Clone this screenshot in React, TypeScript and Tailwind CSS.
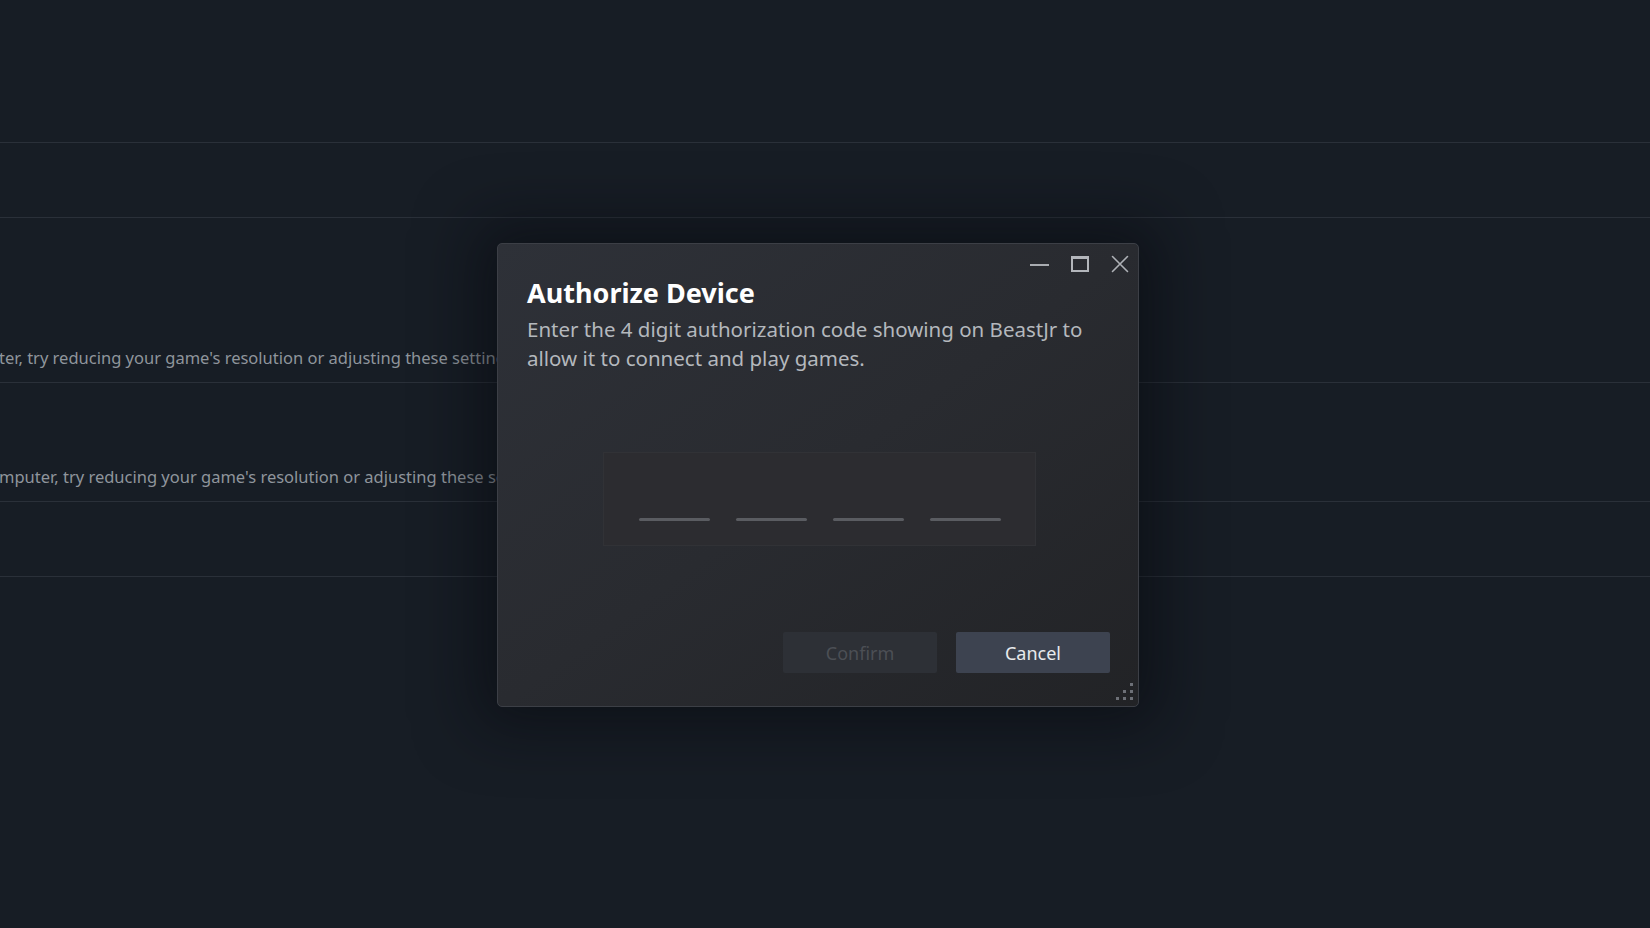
// Rows of the settings page sitting behind the modal
const rows = [
  { h: "h-[143px]", text: "" },
  { h: "h-[75px]", text: "" },
  { h: "h-[165px]", text: "ter, try reducing your game's resolution or adjusting these settings." },
  { h: "h-[119px]", text: "mputer, try reducing your game's resolution or adjusting these settings." },
  { h: "h-[75px]", text: "" },
];

function ResizeGrip() {
  const dots = [
    [0, 0, 1],
    [0, 1, 1],
    [1, 1, 1],
  ];
  return (
    <div className="absolute right-[5px] bottom-[6px] flex flex-col gap-[4px]">
      {dots.map((row, r) => (
        <div key={r} className="flex gap-[4px]">
          {row.map((on, c) => (
            <span key={c} className={`w-[3px] h-[3px] ${on ? "bg-[#6d7077]" : "bg-transparent"}`} />
          ))}
        </div>
      ))}
    </div>
  );
}

export default function App() {
  return (
    <div
      className="relative w-[1650px] h-[928px] overflow-hidden bg-[#171d25]"
      style={{ fontFamily: '"Noto Sans", "Open Sans", sans-serif' }}
    >
      {/* Background settings rows */}
      <div className="flex flex-col">
        {rows.map((row, i) => (
          <div key={i} className={`${row.h} border-b border-[#2a3039] flex items-end pb-[12px]`}>
            {row.text && (
              <p className="whitespace-nowrap text-[16.5px] leading-[24px] text-[#8f959c] -ml-[1px]">{row.text}</p>
            )}
          </div>
        ))}
      </div>

      {/* Modal */}
      <div className="absolute left-[497px] top-[243px] w-[642px] h-[464px] rounded-[5px] border border-[#3c3f46] bg-linear-to-br from-[#2e3138] via-[#292b30] to-[#222326] shadow-[0_0_60px_20px_rgba(8,10,14,0.55)]">
        {/* Window controls */}
        <div className="absolute top-[11px] right-[9px] flex items-center gap-[22px]">
          <span className="block w-[19px] h-[2px] bg-[#a9acb1] mt-[2px]" />
          <span className="block w-[18px] h-[16px] border-2 border-t-[3px] border-[#b3b6bb]" />
          <svg width="18" height="18" viewBox="0 0 18 18" className="text-[#aeb1b6]">
            <path d="M1.5 1.5 L16.5 16.5 M16.5 1.5 L1.5 16.5" stroke="currentColor" strokeWidth="1.6" strokeLinecap="round" />
          </svg>
        </div>

        <div className="pl-[29px] pr-[28px] pt-[32px] flex flex-col">
          <h1 className="text-[27px] leading-[33px] font-bold text-white">Authorize Device</h1>
          <p className="mt-[6px] text-[20.5px] leading-[29px] text-[#b4b8bd] w-[570px]">
            Enter the 4 digit authorization code showing on BeastJr to allow it to connect and play games.
          </p>

          {/* Code entry */}
          <div className="mt-[79px] ml-[76px] w-[433px] h-[94px] bg-[#2c2c30] border border-[#313236] flex items-end gap-[26px] pl-[35px] pb-[24px]">
            {[0, 1, 2, 3].map((i) => (
              <span key={i} className="block w-[71px] h-[3px] rounded-full bg-[#5a5c61]" />
            ))}
          </div>

          {/* Actions */}
          <div className="mt-[86px] -ml-[5px] flex justify-end gap-[19px]">
            <button className="w-[154px] h-[41px] rounded-[2px] bg-[#2d3036] text-[18px] text-[#4c4f55] pt-[1px]">Confirm</button>
            <button className="w-[154px] h-[41px] rounded-[2px] bg-[#3d4350] text-[18px] text-[#e8eaec] pt-[1px]">Cancel</button>
          </div>
        </div>

        <ResizeGrip />
      </div>
    </div>
  );
}
